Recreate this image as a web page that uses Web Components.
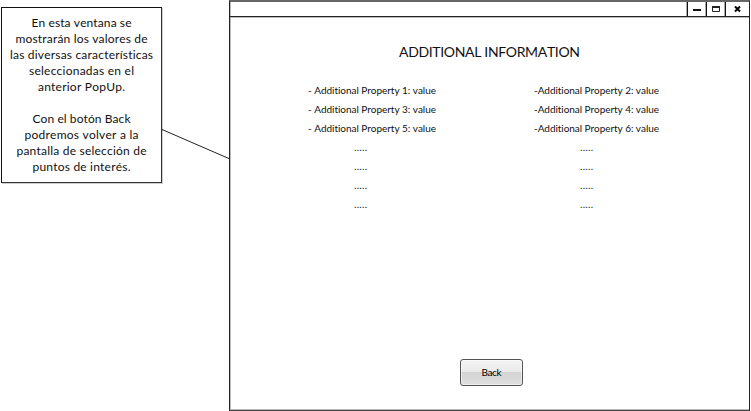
<!DOCTYPE html>
<html lang="es"><head><meta charset="utf-8"><title>Additional information</title>
<style>
html,body{margin:0;width:751px;height:411px;overflow:hidden;background:#fff}
body{font-family:Lato,"Open Sans",sans-serif;color:#111}
</style></head><body>
<mock-page></mock-page>
<script>
// One line of text, tracked so that it fills the width in its "w" attribute.
class FitLine extends HTMLElement{
 connectedCallback(){
  const r=this.attachShadow({mode:'open'});
  r.innerHTML='<style>:host{display:block;white-space:pre;width:max-content;font-kerning:none;font-variant-ligatures:none}span{display:inline-block}</style><span><slot></slot></span>';
  const s=r.querySelector('span'),w=+this.getAttribute('w'),n=this.textContent.length;
  const d=(w-s.getBoundingClientRect().width)/(n-1);
  s.style.letterSpacing=d+'px';s.style.marginRight=-d+'px';
 }
}
customElements.define('fit-line',FitLine);

class NoteBox extends HTMLElement{
 connectedCallback(){
  this.attachShadow({mode:'open'}).innerHTML=`<style>
  :host{display:flex;flex:none;flex-direction:column;align-items:center;box-sizing:border-box;width:161px;height:176px;margin:7px 0 0 1px;padding-top:7px;border:1px solid #111;border-right-color:#333;border-bottom-color:#333;font-size:12px;line-height:16px;box-shadow:1px 1px #ccc}
  .gap{height:16px;flex:none}</style>
  <fit-line w="100">En esta ventana se</fit-line><fit-line w="132">mostrarán los valores de</fit-line><fit-line w="143">las diversas características</fit-line><fit-line w="105">seleccionadas en el</fit-line><fit-line w="87">anterior PopUp.</fit-line><div class="gap"></div>
  <fit-line w="98">Con el botón Back</fit-line><fit-line w="114">podremos volver a la</fit-line><fit-line w="130">pantalla de selección de</fit-line><fit-line w="98">puntos de interés.</fit-line>`;
 }
}
customElements.define('note-box',NoteBox);

class TitleBar extends HTMLElement{
 connectedCallback(){
  this.attachShadow({mode:'open'}).innerHTML=`<style>
  :host{display:flex;justify-content:flex-end;height:14px;border-bottom:1px solid #222;box-shadow:0 1px #bbb}
  svg{display:block;height:14px;border-left:1px solid #111;box-shadow:-1px 0 #aaa}</style>
  <svg width="18" viewBox="0 0 18 14"><path d="M5 7h8v2H5z" fill="#111"/></svg>
  <svg width="18" viewBox="0 0 18 14"><path d="M5.500 4.500h7v5h-7z" fill="none" stroke="#222"/><path d="M5 4h8v2H5z" fill="#222"/></svg>
  <svg width="23" viewBox="0 0 23 14"><path d="M9 4.500l5 5M14 4.500l-5 5" stroke="#000" stroke-width="2"/></svg>`;
 }
}
customElements.define('title-bar',TitleBar);

class PropColumn extends HTMLElement{
 connectedCallback(){
  const w=this.getAttribute('w'),p=this.getAttribute('prefix'),s=+this.getAttribute('start');
  this.attachShadow({mode:'open'}).innerHTML=`<style>
  :host{display:flex;flex-direction:column;width:128px;font-size:10px;line-height:19px}
  .dots{display:flex;flex-direction:column;padding-left:46px}</style>
  ${[0,2,4].map(i=>`<fit-line w="${w}">${p}Additional Property ${s+i}: value</fit-line>`).join('')}
  <div class="dots">${'<fit-line w="13">.....</fit-line>'.repeat(4)}</div>`;
 }
}
customElements.define('prop-column',PropColumn);

class PushButton extends HTMLElement{
 connectedCallback(){
  this.attachShadow({mode:'open'}).innerHTML=`<style>
  :host{display:block}
  button{display:flex;justify-content:center;align-items:center;box-sizing:border-box;width:63px;height:27px;padding:0 0 2px;border:1px solid #555;border-radius:3px;background:linear-gradient(#f4f4f4,#e9e9e9 50%,#d4d4d4 50%,#dedede);box-shadow:inset 0 0 0 1px #ffffff80;color:#000;font:10px Lato,sans-serif}</style>
  <button><fit-line w="20">Back</fit-line></button>`;
 }
}
customElements.define('push-button',PushButton);

class AppWindow extends HTMLElement{
 connectedCallback(){
  this.attachShadow({mode:'open'}).innerHTML=`<style>
  :host{display:flex;flex:none;flex-direction:column;box-sizing:border-box;width:521px;height:411px;border:1px solid #222;border-top:2px solid #666;border-bottom-color:#444;box-shadow:inset 1px 0 #bbb,inset 0 -1px #bbb}
  .title{display:flex;justify-content:center;padding:25px 0 0;font-size:14px;line-height:20px}
  .title fit-line{margin-left:0}
  .cols{display:flex;gap:98px;padding:19px 0 0 78px}
  .foot{display:flex;padding:0 0 24px 230px;margin-top:auto}</style>
  <title-bar></title-bar><div class="title"><fit-line w="181">ADDITIONAL INFORMATION</fit-line></div>
  <div class="cols"><prop-column prefix="- " w="128" start="1"></prop-column><prop-column prefix="-" w="125" start="2"></prop-column></div>
  <div class="foot"><push-button></push-button></div>`;
 }
}
customElements.define('app-window',AppWindow);

class MockPage extends HTMLElement{
 connectedCallback(){
  this.attachShadow({mode:'open'}).innerHTML=`<style>
  :host{display:flex;width:751px;height:411px}
  svg{display:block;flex:none;width:67px;height:411px}</style>
  <note-box></note-box><svg viewBox="0 0 67 411"><path d="M0 129.500L68 159" stroke="#222" fill="none"/></svg><app-window></app-window>`;
 }
}
customElements.define('mock-page',MockPage);
</script></body></html>
